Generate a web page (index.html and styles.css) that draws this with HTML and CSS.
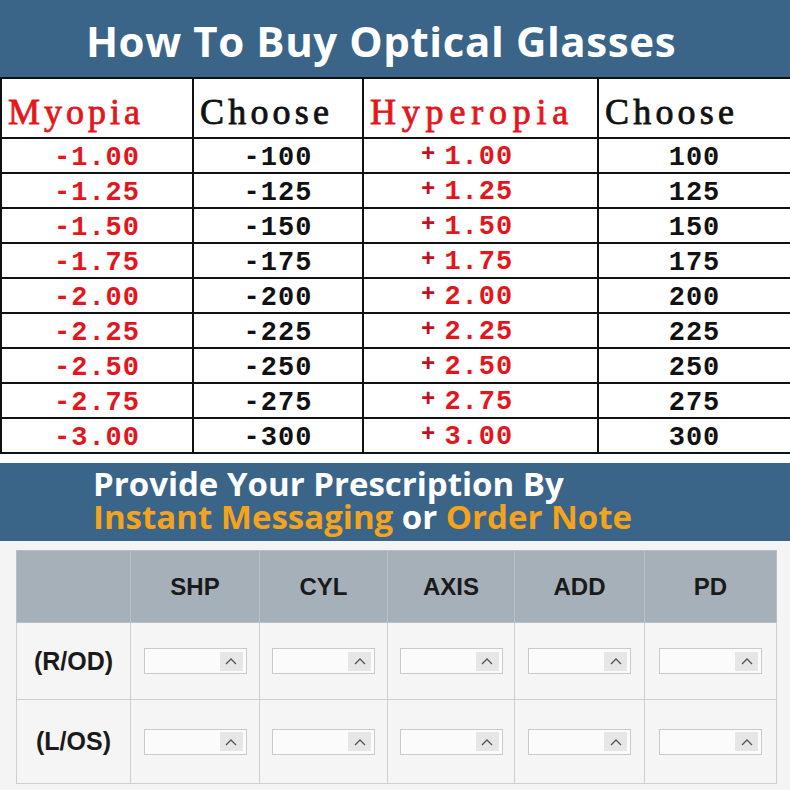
FILE: index.html
```html
<!DOCTYPE html>
<html>
<head>
<meta charset="utf-8">
<link rel="stylesheet" href="styles.css">
</head>
<body>
<div class="band title-band"><h1 class="title">How To Buy Optical Glasses</h1></div>
<table class="chart">
  <colgroup><col class="c1"><col class="c2"><col class="c3"><col class="c4"></colgroup>
  <tr class="head">
    <td class="red h-myo">Myopia</td><td class="h-cho">Choose</td><td class="red h-hyp">Hyperopia</td><td class="h-cho">Choose</td>
  </tr>
  <tr><td class="red">-1.00</td><td>-100</td><td class="red hyp"><span class="plus">+</span>1.00</td><td>100</td></tr>
  <tr><td class="red">-1.25</td><td>-125</td><td class="red hyp"><span class="plus">+</span>1.25</td><td>125</td></tr>
  <tr><td class="red">-1.50</td><td>-150</td><td class="red hyp"><span class="plus">+</span>1.50</td><td>150</td></tr>
  <tr><td class="red">-1.75</td><td>-175</td><td class="red hyp"><span class="plus">+</span>1.75</td><td>175</td></tr>
  <tr><td class="red">-2.00</td><td>-200</td><td class="red hyp"><span class="plus">+</span>2.00</td><td>200</td></tr>
  <tr><td class="red">-2.25</td><td>-225</td><td class="red hyp"><span class="plus">+</span>2.25</td><td>225</td></tr>
  <tr><td class="red">-2.50</td><td>-250</td><td class="red hyp"><span class="plus">+</span>2.50</td><td>250</td></tr>
  <tr><td class="red">-2.75</td><td>-275</td><td class="red hyp"><span class="plus">+</span>2.75</td><td>275</td></tr>
  <tr><td class="red">-3.00</td><td>-300</td><td class="red hyp"><span class="plus">+</span>3.00</td><td>300</td></tr>
</table>
<div class="spacer"></div>
<div class="band provide-band">
  <div class="provide"><span class="ln">Provide Your Prescription By</span></div>
  <div class="provide"><span class="ln"><span class="orange">Instant Messaging</span> or <span class="orange">Order Note</span></span></div>
</div>
<div class="form-area">
  <table class="rx">
    <colgroup><col class="r0"><col class="r1"><col class="r2"><col class="r3"><col class="r4"><col class="r5"></colgroup>
    <tr class="rx-head"><th></th><th>SHP</th><th>CYL</th><th>AXIS</th><th>ADD</th><th>PD</th></tr>
    <tr class="rx-row">
      <th class="eye">(R/OD)</th>
      <td><div class="spin"><span class="btn"><svg width="12" height="8" viewBox="0 0 12 8"><path d="M1 7 L6 2 L11 7" fill="none" stroke="#555" stroke-width="1.3"/></svg></span></div></td>
      <td><div class="spin"><span class="btn"><svg width="12" height="8" viewBox="0 0 12 8"><path d="M1 7 L6 2 L11 7" fill="none" stroke="#555" stroke-width="1.3"/></svg></span></div></td>
      <td><div class="spin"><span class="btn"><svg width="12" height="8" viewBox="0 0 12 8"><path d="M1 7 L6 2 L11 7" fill="none" stroke="#555" stroke-width="1.3"/></svg></span></div></td>
      <td><div class="spin"><span class="btn"><svg width="12" height="8" viewBox="0 0 12 8"><path d="M1 7 L6 2 L11 7" fill="none" stroke="#555" stroke-width="1.3"/></svg></span></div></td>
      <td><div class="spin"><span class="btn"><svg width="12" height="8" viewBox="0 0 12 8"><path d="M1 7 L6 2 L11 7" fill="none" stroke="#555" stroke-width="1.3"/></svg></span></div></td>
    </tr>
    <tr class="rx-row">
      <th class="eye">(L/OS)</th>
      <td><div class="spin"><span class="btn"><svg width="12" height="8" viewBox="0 0 12 8"><path d="M1 7 L6 2 L11 7" fill="none" stroke="#555" stroke-width="1.3"/></svg></span></div></td>
      <td><div class="spin"><span class="btn"><svg width="12" height="8" viewBox="0 0 12 8"><path d="M1 7 L6 2 L11 7" fill="none" stroke="#555" stroke-width="1.3"/></svg></span></div></td>
      <td><div class="spin"><span class="btn"><svg width="12" height="8" viewBox="0 0 12 8"><path d="M1 7 L6 2 L11 7" fill="none" stroke="#555" stroke-width="1.3"/></svg></span></div></td>
      <td><div class="spin"><span class="btn"><svg width="12" height="8" viewBox="0 0 12 8"><path d="M1 7 L6 2 L11 7" fill="none" stroke="#555" stroke-width="1.3"/></svg></span></div></td>
      <td><div class="spin"><span class="btn"><svg width="12" height="8" viewBox="0 0 12 8"><path d="M1 7 L6 2 L11 7" fill="none" stroke="#555" stroke-width="1.3"/></svg></span></div></td>
    </tr>
  </table>
</div>
</body>
</html>
```
FILE: styles.css
```css
* { box-sizing: border-box; }
html, body { margin: 0; padding: 0; background: #fff; }
body { width: 790px; height: 790px; overflow: hidden; }

.band { background: #3b6489; }

.title-band {
  height: 77px;
  display: flex;
  align-items: center;
  justify-content: center;
  padding: 4px 28px 0 0;
}
.title {
  margin: 0;
  font-family: "Open Sans", "Liberation Sans", sans-serif;
  font-weight: 700;
  font-size: 42px;
  line-height: 50px;
  color: #fff;
  letter-spacing: 0.6px;
}

.chart {
  width: 790px;
  border-collapse: collapse;
  table-layout: fixed;
  font-family: "Liberation Mono", "DejaVu Sans Mono", monospace;
  font-weight: 700;
}
.chart col.c1 { width: 192px; }
.chart col.c2 { width: 170px; }
.chart col.c3 { width: 235px; }
.chart col.c4 { width: 193px; }
.chart td {
  border: 2px solid #111;
  height: 35px;
  padding: 4px 0 0 0;
  text-align: center;
  font-size: 27px;
  letter-spacing: 1px;
  color: #111;
  line-height: 28px;
}
.chart tr.head td {
  height: 60px;
  padding: 7px 0 0 6px;
  font-family: "Liberation Serif", "DejaVu Serif", serif;
  font-size: 36px;
  font-weight: 400;
  text-align: left;
  line-height: 40px;
  -webkit-text-stroke: 0.8px currentColor;
}
.chart td.h-myo { letter-spacing: 4px; padding-left: 7px; }
.chart td.h-cho { letter-spacing: 4.2px; }
.chart td.h-hyp { letter-spacing: 5.8px; }
.chart td.red { color: #e3161d; }
.chart td.hyp { text-align: left; padding-left: 57px; }
.chart .plus { color: #c40f1c; font-size: 24px; margin-right: 8px; position: relative; top: -3px; }

.spacer { height: 9px; }

.provide-band {
  height: 78px;
  padding: 4px 0 0 93px;
}
.provide {
  font-family: "Open Sans", "Liberation Sans", sans-serif;
  font-weight: 700;
  font-size: 33px;
  line-height: 33px;
  height: 33px;
  color: #fff;
}
.ln { display: inline-block; height: 33px; line-height: 33px; vertical-align: top; }
.orange { color: #f4a31c; }

.form-area {
  background: #f4f4f4;
  height: 249px;
  padding: 9px 14px 0 16px;
}
.rx {
  width: 760px;
  border-collapse: collapse;
  table-layout: fixed;
  font-family: "Liberation Sans", Arial, sans-serif;
}
.rx col.r0 { width: 114px; }
.rx col.r1 { width: 129px; }
.rx col.r2 { width: 128px; }
.rx col.r3 { width: 127px; }
.rx col.r4 { width: 130px; }
.rx col.r5 { width: 132px; }
.rx th, .rx td {
  border: 1px solid #cfcfcf;
  padding: 0;
  text-align: center;
}
.rx-head th {
  background: #a5b0b9;
  height: 72px;
  font-size: 24px;
  font-weight: 700;
  color: #1a1a1a;
  border-color: #b8c0c6;
}
.rx-row th, .rx-row td { background: #f5f5f5; }
.rx-row:nth-child(2) th, .rx-row:nth-child(2) td { height: 77px; }
.rx-row:nth-child(3) th, .rx-row:nth-child(3) td { height: 84px; }
.eye { font-size: 25px; font-weight: 700; color: #1a1a1a; }

.spin {
  width: 103px;
  height: 26px;
  margin: 0 auto;
  border: 1px solid #c9c9c9;
  background: #fbfbfb;
  display: flex;
  justify-content: flex-end;
  align-items: center;
  padding-right: 3px;
}
.btn {
  width: 23px;
  height: 19px;
  background: #e6e6e6;
  display: flex;
  align-items: center;
  justify-content: center;
}
```
